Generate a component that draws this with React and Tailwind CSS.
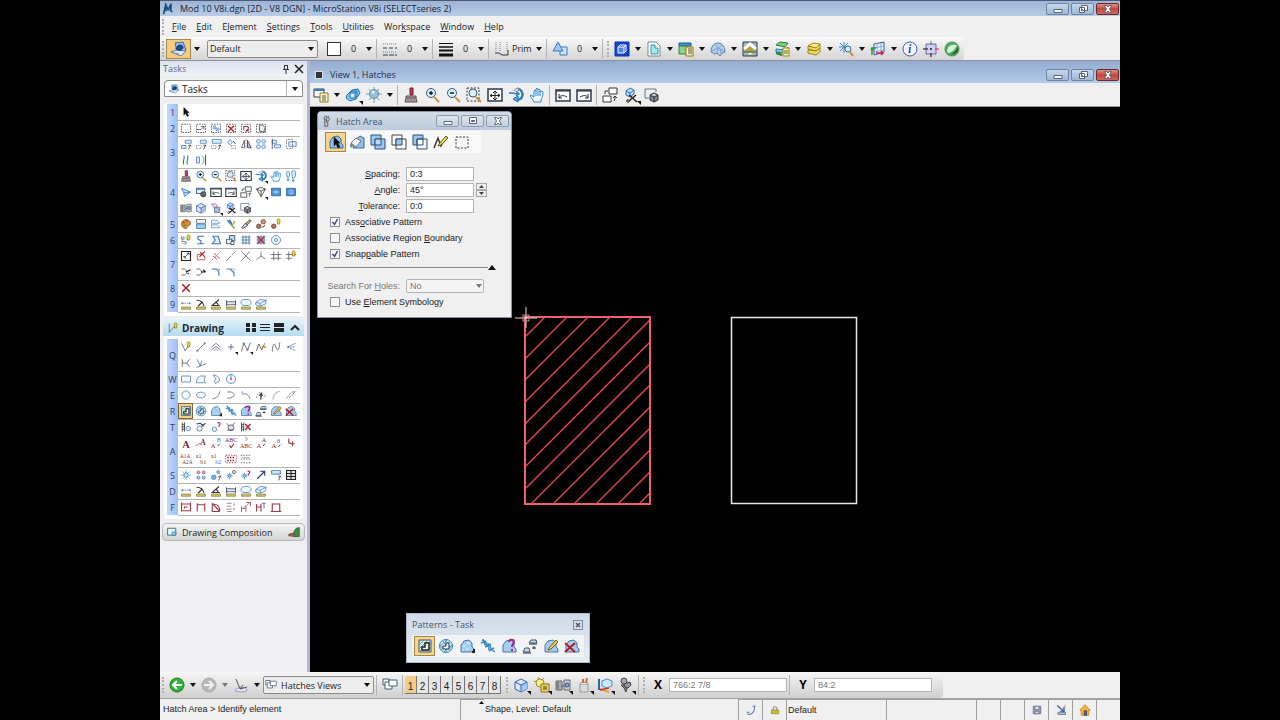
import React, { useState } from "react";

// Small path helpers, every icon lives on a 16x16 grid
const box = (x, y, w, h) => `M${x} ${y}h${w}v${h}h${-w}z`;
const dot = (x, y, r) => `M${x - r} ${y}a${r} ${r} 0 1 0 ${2 * r} 0a${r} ${r} 0 1 0 ${-2 * r} 0z`;

const BLUE = "#3b78c4";
const SKY = "#b9dcf5";
const DARK = "#2d3a4d";
const GRAY = "#7c8794";
const RED = "#b8232f";
const MAROON = "#9c3a44";
const DASH = "2 1.5";

const star = "M8 1v14M1 8h14M3 3l10 10M13 3L3 13";
const blob = "M2 14V7l3-4 5-1 3 3v4l2 2v3z";
const ruler = [box(2, 12, 12, 3), "#8f8430", "#cdc37a"];
const pencil = ["M6 10l7-8 2 2-7 7-3 1z", "#6b5a18", "#ecd257"];
const tinyArrow = ["M11 15c2-1 2-3 2-5M11 11l2-2 2 2", "#111"];
const bulb = ["M11 1a2.500 2.500 0 0 1 2 4v3h-3V5a2.500 2.500 0 0 1 1-4z", "#8a7a10", "#f0de3c"];

// [d, stroke, fill, width, dash] for shapes, { t, x, y, s, c } for letters
const ICONS = {
  logo: [["M2 15L5 2l3 7 4-8-1 9 3 2M5 2v9M12 1v10", "#174a7c", "none", 2]],
  model: [["M4 2l8-1 3 8-9 2z", "#3c68b0", "#8fc2f0"], ["M0 11l6-2 9 1-5 5z", "#5b80b8", "#dbe8f6"], ["M6 6c1-3 6-2 6 0s-2 4-5 3-2-1-1-3z", "#12356e", "#1a4a90"], ["M3 12l5 1", "#6d94c8"]],
  lineStyle: [["M1 3h14", GRAY, "none", 1, "1 1"], ["M1 7h14", DARK, "none", 1, "4 2"], ["M1 11h14", GRAY, "none", 1, "1 1"], ["M1 14h14", DARK, "none", 1, "5 1"]],
  lineWeight: [["M1 2.500h14", "#111"], ["M1 6h14", "#111", "none", 1.5], ["M1 9.500h14", "#111", "none", 2], ["M1 14h14", "#111", "none", 3]],
  elemClass: [["M2 1v9M6 1v9M13 1v9", GRAY, "none", 1, "1 1"], ["M1 12h4l3 2h6V9", "#333"]],
  priority: [[box(8, 6, 7, 8), BLUE, "#cfe3f7"], ["M1 10L6 1l5 9z", BLUE, "#9fc6ee"]],
  models: [[box(1, 1, 14, 14), "#0e2fa0", "#1546d0", 1], [box(4, 6, 6, 6), "#fff", "#4b80ee"], ["M4 6l2-2h6v6l-2 2M10 6l2-2", "#fff"]],
  page: [["M2 1h8l4 4v10H2z", GRAY, "#fff"], ["M5 4h4v3h3v6H5z", "#2a9aa0", "#a9e7ea"]],
  refs: [[box(1, 2, 12, 3), "#24548c", "#3b9ad6"], [box(1, 5, 8, 8), "#3d8448", "#8ccf8c"], [box(8, 6, 7, 9), "#8a7a20", "#fbf4b8"], ["M10 8h4M10 10h4M10 12h4", "#555"]],
  mesh: [["M1 11c0-4 2-9 7-9s7 5 7 9l-3 1-2 3-3-3-2 1z", "#5f7fb0", "#b4d0ee"], ["M5 4l3 3 4-3M8 7l-1 5M2 10l6-3 6 3M10 8l1 4", "#7f9ccc"]],
  raster: [[box(1, 1, 14, 14), "#2d3a4d", "#aab6b4"], ["M8 1l7 6-7 7-7-7z", "none", "#fff"], ["M2 10l6-5 6 5z", "none", "#b0a040"], [box(2, 10, 12, 2), "none", "#6f8a5c"]],
  pointCloud: [["M2 4l4-3 8 1-3 4z", "#2c7c32", "#7bd07b"], ["M2 8l9 1 3-3v2l-4 4-8-1z", "#2c7c9a", "#78cfe0"], ["M2 12l6 2", "#2c7c32", "none", 2], [box(9, 7, 6, 8), "#9a8a20", "#fbf2a0"], ["M10 10h4M10 12h4", "#666"]],
  levels: [["M2 5l5-3 7 1-4 4z", "#9a8420", "#fbec86"], ["M2 5v3l8 2 4-3V3l-4 4z", "#9a8420", "#f3dc5c"], ["M2 9v3l8 2 4-3V7l-4 3z", "#9a8420", "#f3dc5c"]],
  sunZoom: [["M6 1v11M1 6h10M2 2l8 8M10 2l-8 8", "#3a8cd0"], [dot(10, 8, 3), "#3568a8", "#d7ecfc"], ["M12 11l3 4", "#c08a30", "none", 2]],
  acs: [["M4 3l10-2v10L4 14z", "#3b58a8", "#eef3fc"], ["M7 2v11M11 2v10M4 7l10-2M4 11l10-2", "#8ba4d8"], ["M2 14V7h4M1 9l1-2 2 2", "#2c9a38", "none", 1.5], ["M6 12h7M11 10l2 2-2 2", "#d02838", "none", 1.5]],
  info: [[dot(8, 8, 7), "#3b58c8", "#f4f8ff"], { t: "i", x: 6, y: 12, s: 12, c: "#2743b4", f: "Liberation Serif", b: true }],
  snap: [[box(3, 3, 10, 10), "#6b68a8", "#cfcdf0"], ["M8 0v4", "#2c9a38"], ["M8 12v4M0 8h5", "#111"], ["M12 8h4", "#d02838"], [dot(8, 8, 1), "none", "#222"]],
  ball: [[dot(8, 8, 7), "#4c8c58", "#4cae5c"], ["M3 10C4 4 8 3 13 4c-2 5-6 8-9 8z", "none", "#d8f2da"], ["M7 13c3-1 6-4 7-7 1 5-3 8-7 7z", "none", "#185c28"]],

  viewAttr: [[box(1, 2, 10, 8), DARK, "#fff"], ["M1 3h10", BLUE, "none", 2], [box(7, 6, 8, 9), "#8a7a20", "#fbf6c8"], ["M9 9h4M9 11h4M9 13h4", "#555"]],
  display: [["M2 8l5-5 6-1 2 4-4 6-6 2-4-3z", "#2374b4", "#7ec8f0"], [box(5, 6, 5, 5), "#2374b4", "#d5effc"], ["M5 6l2-2h5v5l-2 2M10 6l2-2", "#2374b4"]],
  light: [["M8 0v16M0 7h16M3 2l10 11M13 2L3 13", "#6a9ab8"], [dot(8, 7, 4.5), "#5f8ca4", "#93c0d8"], [dot(7, 5, 1.5), "none", "#eaf7fc"]],
  brush: [["M7 1h3v7H7z", "#6d2028", "#b8434c"], ["M3 9h10v2H3zM3 11l-1 4h12l-1-4", "#5c4a4c", "#b8a4a8"], ["M5 12v3M8 12v3M11 12v3", "#777"]],
  zoomIn: [["M10 10l5 5", "#c8923c", "none", 2], [dot(7, 6, 4.500), "#3c5878", "#d9f0fb"], ["M5 6h4M7 4v4", "#123", "none", 1.5]],
  zoomOut: [["M10 10l5 5", "#c8923c", "none", 2], [dot(7, 6, 4.500), "#3c5878", "#d9f0fb"], ["M5 6h4", "#123", "none", 1.5]],
  zoomWin: [[box(1, 1, 12, 13), "#333", "none", 1, DASH], ["M10 10l5 5", "#c8923c", "none", 2], [dot(7, 6, 4), "#3c5878", "#d9f0fb"]],
  fit: [[box(1, 2, 14, 12), DARK, "#fff", 1.5], ["M8 4v9M3 8.500h10M6 6l2-2 2 2M6 11l2 2 2-2M5 7L3 8.500 5 10M11 7l2 1.500-2 1.500", "#222"]],
  rotate: [["M1 6h3l6 1M8 4l3 3-3 2", "#2a80c4", "none", 1.500], ["M11 2c5 3 5 11-3 11", "#2a80c4", "none", 2.500], ["M10 9v6l-5-3z", "#1a6cb0", "#55aeea"], ["M6 4c1-2 3-3 5-3l-1 3", "#8a6a9a"]],
  hand: [["M5 15c-1-3-3-4-4-6l1-1 3 2V4l1-1 1 1V2l1-1 1 1v1l1-1 1 1v2l2-1 1 1c0 4-1 6-2 8v2z", "#2e86c8", "#f3fafe"], ["M7 4v5M9 3v6M11 4v5", "#2e86c8"]],
  prevView: [[box(1, 3, 14, 11), DARK, "#fff", 1.500], ["M1 4h14", "#222", "none", 1], ["M4 11c1-3 5-3 8-1M4 7v4h3", "#222"]],
  nextView: [[box(1, 3, 14, 11), DARK, "#fff", 1.500], ["M1 4h14", "#222", "none", 1], ["M12 11c-1-3-5-3-8-1M12 7v4H9", "#222"]],
  copyView: [[box(7, 1, 8, 6), "#333", "#fff"], [box(1, 9, 8, 6), "#333", "#fff"], ["M3 7V4h3M12 14c1-1 1-3 1-4M11 11l2-2 2 2", "#333"]],
  clip: [["M3 4l4-3 4 2v4l-4 3-4-2z", "#2e6cb8", "#bfe0f8"], ["M3 4l4 2 4-3M7 6v4", "#2e6cb8"], ["M6 8l8 7M13 8l-7 6", "#222", "none", 1.5], [dot(5, 14, 1.3), "#222"]],
  clipMask: [["M1 2h11v3M1 2v9h4", "#678"], ["M6 8l4-2 4 2v5l-4 2-4-2z", "#333", "#7d8894"], ["M6 8l4 2 4-2M10 10v5", "#333"], ["M6 8l4-2 4 2-4 2z", "#444", "#c4ccd4"]],

  pointer: [["M5 2v10l2.500-2 2 4 2-1-2-4h3z", "#111", "#111", 0.5]],
  fence: [[box(2, 3, 12, 11), "#333", "none", 1, DASH]],
  fenceMod: [[box(2, 3, 12, 11), "#333", "none", 1, DASH], ["M2 10h6l4-4M8 6h4v4", "#444"]],
  fenceManip: [[box(2, 3, 12, 11), "#333", "none", 1, DASH], [dot(6, 7, 2), BLUE, SKY], [dot(10, 10, 2), BLUE, SKY]],
  fenceDel: [[box(2, 3, 12, 11), "#333", "none", 1, DASH], ["M4 5l8 8M12 5l-8 8", RED, "none", 2]],
  fenceDrop: [[box(2, 3, 12, 11), "#333", "none", 1, DASH], ["M5 11V6h5l2 2M8 12h3V9z", MAROON, "none", 1.5]],
  fenceFile: [[box(2, 3, 12, 11), "#333", "none", 1, DASH], ["M6 4h4l3 3v6H6z", "#444", "#eee"]],
  copy: [[box(7, 3, 8, 4), BLUE, "#dff0fb"], [box(2, 10, 6, 4), BLUE, "#dff0fb"], tinyArrow],
  move: [[box(7, 3, 8, 4), BLUE, "#dff0fb"], [box(2, 10, 6, 4), "#555", "none", 1, "1 1"], tinyArrow],
  scale: [[box(3, 2, 12, 5), BLUE, "#dff0fb"], [box(2, 10, 6, 4), "#555", "none", 1, "1 1"], tinyArrow],
  turn: [["M3 6l4-4 3 4-3 3z", BLUE, "#dff0fb"], [box(8, 10, 6, 4), "#555", "none", 1, "1 1"], ["M11 4l3 4", "#111"]],
  mirror: [["M6 3v10H2z", "#444", "#fff"], ["M8 1v14", RED, "none", 1, "1 1"], ["M10 3v10h5z", "#333", "#9fc6ee"]],
  array: [[dot(4.5, 4.5, 2.500), BLUE, "#dff0fb"], [dot(11.5, 4.5, 2.500), BLUE, "#dff0fb"], [dot(4.5, 11.500, 2.5), BLUE, "#dff0fb"], [dot(11.5, 11.5, 2.5), BLUE, "#dff0fb"]],
  align: [[box(3, 3, 6, 4), BLUE, "#dff0fb"], [box(6, 9, 8, 4), BLUE, "#dff0fb"], ["M3 1v14", "#333"]],
  stretch: [[box(5, 5, 10, 6), BLUE, "#dff0fb"], [box(2, 2, 8, 12), "#333", "none", 1, "1 1"]],
  wave: [["M5 2c3 4-3 7 0 12M10 2c3 4-3 7 0 12", "#2d6f9a", "none", 1.500]],
  offset: [[box(2, 4, 4, 8), BLUE, "#dff0fb"], ["M9 2c4 4 4 8 0 12", "#2d6f9a"], ["M14 1v14", "#222"]],
  walk: [["M2 4c0-3 4-3 4 0v4l-1 2H3zM3 12h2v2H3zM9 3c0-3 5-3 5 0v5l-2 3h-2zM10 13h2v2h-2z", "#2e86c8", "#d5effc"]],
  fly: [["M2 3l12 5-8 6-1-5z", "#2e6cb8", "#bfe0f8"], ["M5 9l9-1", "#2e6cb8"]],
  camera: [[box(2, 3, 11, 7), DARK, "#e8eef5"], ["M2 4h11", BLUE, "none", 2], [dot(11, 11, 3.5), "#333", "#5a6472"]],
  viewCone: [["M2 4l6-2 6 2-6 10z", "#333", "#f2f4f7"], ["M2 4l6 3 6-3M8 7v7", "#333"]],
  navTile: [[box(2, 3, 12, 10), "#285c9c", "#4c90d4"], ["M4 8h8M8 5v6", "#d6ecff"]],
  navTile2: [[box(2, 3, 12, 10), "#285c9c", "#4c90d4"], [dot(8, 8, 2.5), "#d6ecff"]],
  film: [[box(1, 4, 6, 9), "#666", "#a4aab2"], [box(9, 3, 6, 10), "#666", "#ccd0d6"], [dot(12, 8, 2), "#334a8c", "#88a4e0"], ["M3 5v7M7 9h2", "#555"]],
  cube: [["M2 5l6-3 6 3v7l-6 3-6-3z", "#3a62b0", "#d9e8fc"], ["M8 8l6-3v7l-6 3z", "none", "#a4c6f2"], ["M2 5l6 3 6-3M8 8v7", "#3a62b0"]],
  hide: [["M2 3l5-1 3 3-4 3z", "#9a6a88", "#f0d6e6"], [box(6, 7, 7, 7), "#57688c", "#aab9da"]],

  palette: [["M2 8c0-8 12-7 12-1 0 4-4 2-4 4s-2 4-4 3-4-3-4-6z", "#8c4a14", "#d88838"], [dot(5, 6, 1), "none", "#2743b4"], [dot(9, 4, 1), "none", "#c81c2c"], [dot(6, 10, 1), "none", "#2c9a38"]],
  attrs: [[box(2, 2, 12, 5), "#555", "#f4fafd"], [box(2, 8, 12, 6), BLUE, "#8ecbe8"], ["M4 11h8", "#fff", "none", 1, "1 1"]],
  attrs2: [["M2 3h8l3 4H2zM2 9h8l3 4H2z", "#5a8fc0", "#f4fafd"]],
  matchEl: [["M3 3l5 5M6 2l4 8", "#3a78c4", "none", 2], ["M7 8l6 6", "#8cae34", "none", 2], ["M11 8l2-4", "#d0a020", "none", 2]],
  brush2: [["M2 13l5-6 3 3-6 4z", "#333", "#d8d8d0"], ["M8 7l5-5 2 2-5 5z", "#333", "#c6a878"]],
  swap: [[dot(5, 11, 3), "#6a4028", "#a87858"], [dot(11, 5, 3), "#6a4028", "#c89a78"], ["M9 12c3 0 4-1 4-3", "#111"]],
  swapBulb: [[dot(5, 11, 3), "#6a4028", "#a87858"], bulb],
  groupBulb: [["M2 3v4h4M2 10h5v4M5 3v3", "#567"], [box(3, 5, 6, 8), "#678", "none", 1, "1 1"], bulb],
  chain: [["M12 3H4v4l4 2v4H3M12 13H7", BLUE, "none", 1.5]],
  shape: [["M4 3h7l3 10H3l4-5z", BLUE, "#dff0fb", 1.500]],
  region: [[box(6, 2, 7, 7), DARK, "#b9dcf5"], [box(2, 7, 7, 6), DARK, "#dff0fb"], [box(8, 10, 4, 4), DARK, "#fff"]],
  hash: [["M4 2v12M8 2v12M12 2v12M2 4h12M2 8h12M2 12h12", "#2d5f9a"]],
  hashRed: [["M4 2v12M8 2v12M12 2v12M2 4h12M2 8h12M2 12h12", "#38506f"], ["M4 4l8 8M12 4l-8 8", "#a82858", "none", 2]],
  target: [[dot(8, 8, 6), "#3b78c4", "#eef7fd"], [dot(8, 8, 2), "#3b78c4"]],
  modEl: [[box(2, 2, 12, 12), "#222", "#fff", 1.5], ["M4 9h3v3M6 10l6-6M9 4h3v3", "#222"]],
  partDel: [["M3 6h5M3 6v7h10V9", MAROON], ["M7 3l6 6M13 2L6 9", RED, "none", 1.500]],
  breakEl: [["M2 14L14 2", MAROON, "none", 1, "3 2"], ["M5 4l8 8M4 8l6 5", RED]],
  extend: [["M2 14l6-6", "#555"], ["M9 7l5-5", BLUE]],
  intersect: [["M2 2l12 12", "#555"], ["M13 2L2 14", "#555"]],
  extLine: [["M2 13l6-5V2M8 8l6 4", "#555"]],
  trim: [["M5 2v12M11 2v12M1 6h14M1 11h14", "#556"]],
  trimBulb: [["M5 2v12M1 6h14M1 11h9", "#556"], bulb],
  insVert: [["M2 4h4c4 2 4 6 0 8H2", "#444"], ["M8 8l6-3", "#111", "none", 1.500], [dot(11, 10, 1), "none", "#111"]],
  delVert: [["M2 4h4c4 2 4 6 0 8H2", "#444"], ["M8 8l6 0M11 5l3 3", "#111", "none", 1.500]],
  fillet: [["M2 4h5c4 0 5 4 5 9", BLUE, "none", 1.500], ["M7 4h6v3", "#999"]],
  chamfer: [["M2 4h5l5 5v5", BLUE, "none", 1.500], ["M7 4h6v3", "#999"]],
  cross: [["M3 3l10 10M13 3L3 13", "#b01c24", "none", 2]],
  mDist: [["M3 7h10", BLUE, "none", 1, "2 1"], [dot(3, 7, 1), BLUE], [dot(13, 7, 1), BLUE], ruler],
  mRad: [["M2 3c5 0 9 3 10 8M4 11l6-6", "#333", "none", 1.500], ruler],
  mAng: [["M12 2L3 10h10M8 6c2 1 3 2 3 4", "#333", "none", 1.500], ruler],
  mLen: [["M2 3v8M14 3v8", "#345"], [box(2, 5, 12, 4), "#345", "#dfe9f4"], ruler],
  mArea: [["M5 2h6c5 1 5 7 0 8H5c-5-1-5-7 0-8z", BLUE, "#eef7fd"], ruler],
  mVol: [["M1 6l6-4 8 1-1 5-8 3-5-2zM1 6l6 1 8-4M7 7v4", BLUE, "#eef7fd"], ruler],

  drawing: [["M3 2v12M3 14l9-11", "#567"], bulb],
  smartLine: [["M2 3l5 10 4-6", "#456"], bulb],
  line: [["M3 13L13 3", "#555"], [dot(3, 13, 1), BLUE], [dot(13, 3, 1), BLUE]],
  multiLine: [["M2 8l6-5 6 5M2 12l6-5 6 5M5 13l3-3 3 3", "#667"]],
  point: [["M8 4v8M4 8h8", "#38506f"]],
  curve: [["M2 14L5 3l5 9 4-10", "#445"], [dot(5, 3, 1), BLUE], [dot(10, 12, 1), BLUE]],
  curvePen: [["M2 13L5 4l4 8 4-9", "#445"], ["M9 8h6", "#c09a20", "none", 2]],
  nCurve: [["M3 14C4 2 6 2 8 8s4 6 5-6", "#445"]],
  bisect: [["M14 3L3 8l11 5M3 8h10", "#3a6a9c", "none", 1, "3 1"]],
  perp: [["M3 3v10M3 8h6M13 3l-4 5 4 5", "#445"]],
  angleLine: [["M3 3l4 9 8-3M7 12l-5 2M7 12l2-7", "#456a8c"]],
  rect: [[box(2, 4, 12, 8), "#4a78ac", "#f4faff"]],
  poly: [["M2 13c0-6 3-9 6-9h6l-2 4 2 5z", "#4a78ac", "#f4faff"]],
  orthoPoly: [["M4 3h4l5 5-1 3-5 3-1-4 2-2z", "#4a78ac", "#f4faff"]],
  regPoly: [[dot(8, 8, 6), BLUE, "#f4faff"], [dot(8, 8, 1), "#c02838"], ["M8 8V2", BLUE]],
  circle: [[dot(8, 8, 5.5), "#4a78ac", "#f8fcff"]],
  ellipse: [["M2 8c0-5 12-5 12 0s-12 5-12 0z", "#4a78ac", "#f8fcff"]],
  arc: [["M3 13c5 0 9-4 10-10", "#556"]],
  halfEll: [["M3 4c7-1 11 3 9 5s-5 4-9 3", "#556"]],
  qEll: [["M3 7c5-2 9 1 10 6", "#556"], ["M3 3v3", BLUE]],
  arcMod: [["M2 12C3 2 13 2 14 12", "#666", "none", 1, DASH], ["M8 6v8M6 9l2-3 2 3", "#222", "none", 1.500]],
  arcAng: [["M4 14c0-6 4-10 9-11", "#889"]],
  arcAxis: [["M2 13c3-6 6-9 12-10", "#889"], ["M10 8l3-4M5 12l3-3", "#456"]],
  hatch: [[box(2, 2, 12, 12), "#4a5560", "#d4ecf6"], ["M2 7l5-5M2 11l9-9M2 14L14 2M5 14l9-9M9 14l5-5", "#4a98b8"], ["M8 5h4v7H5V9h3z", "#222", "#f6f1dc", 1.500]],
  crossHatch: [[dot(8, 8, 6.500), "#3a80a8", "#d4ecf8"], ["M4 2l9 11M2 8l7-6M3 12L13 3M6 14l8-7M8 2v12M2 9h12", "#4a98c0"], ["M8 5h3v6H5V8h3z", "#234", "#f4f8fa"]],
  pattern: [[blob, "#4a74a8", "#a5cdec"], ["M13 14h2v-3", "#222", "none", 2], ["M4 8h2M8 5h2M7 11h3M4 12h1", "#e6f4fd"]],
  linPattern: [["M2 2l4 2 0 3 4 0 1 4 4 3M1 5l5-2M5 9l6-3M9 13l5-3M3 1l2 6M8 5l1 7", "#3a8cc4", "none", 1.5]],
  showPattern: [[blob, "#4a74a8", "#a5cdec"], ["M8 4c0-3 5-3 5 0 0 2-2 2-2 5M11 11v2", "#a02890", "none", 2]],
  matchPattern: [["M7 5l2-3h5l1 3z", "#456", "#b9dcf5"], ["M1 14l2-4h4l1 4z", "#456", "#b9dcf5"], ["M7 6h8M1 15h8", "#333"], ["M12 8v3M10 10h4", "#333"]],
  chgPattern: [[blob, "#4a74a8", "#a5cdec"], pencil],
  delPattern: [[blob, "#4a74a8", "#a5cdec"], ["M1 5l10 9M11 5L1 14", "#b01c24", "none", 2]],
  cell: [["M3 2v12M6 2v12M3 5h3M3 8h3M3 11h3", "#222"], [dot(11, 10, 3), BLUE, "#dff0fb"]],
  cellMod: [[dot(6, 10, 3.5), "#567", "#eef3f8"], ["M2 4l5-1 5 4M9 7l5-4", "#346", "none", 1.500]],
  cellQ: [[dot(6, 11, 3), "#3b78c4", "#dff0fb"], ["M10 3c3-2 5 1 2 3v2", "#a02890", "none", 1.500]],
  cellMask: [[dot(8, 9, 4), "#555", "#dde"], ["M2 3l4 4M13 2l-3 4M3 12h8", "#444"]],
  cellDel: [["M2 2v12M5 2v12M2 5h3M2 8h3M2 11h3", "#222"], ["M7 4l7 8M14 4l-7 8", "#a82838", "none", 2]],
  textA: [{ t: "A", x: 3, y: 14, s: 14, c: "#8c2430", b: true }],
  textNote: [["M1 12l4-3M5 9h3", MAROON], { t: "A", x: 7, y: 11, s: 10, c: "#8c2430", b: true }],
  textEdit: [{ t: "A", x: 1, y: 15, s: 9, c: "#8c2430" }, { t: "B", x: 9, y: 7, s: 8, c: "#3b78c4" }, ["M10 12l3-3", "#111"]],
  textSpell: [{ t: "ABC", x: 0, y: 7, s: 8, c: "#8c2430" }, ["M6 11l2 3 4-5", RED, "none", 1.500]],
  textShow: [["M7 1c3 0 3 2 1 4", "#a02890"], { t: "ABC", x: 0, y: 15, s: 8, c: "#8c2430" }],
  textMatch: [{ t: "A", x: 2, y: 15, s: 9, c: "#8c2430" }, { t: "A", x: 9, y: 7, s: 8, c: "#444" }, ["M11 12l2-3", "#111"]],
  textChg: [{ t: "A", x: 2, y: 15, s: 9, c: "#8c2430" }, { t: "a", x: 9, y: 8, s: 10, c: "#3b78c4" }, ["M11 13l3-3", "#111"]],
  textPt: [["M5 2v6h3M10 6v6M7 9h6", MAROON, "none", 1.500]],
  textCopy: [{ t: "A1A", x: 0, y: 7, s: 7, c: "#8c2430" }, { t: "A2A", x: 3, y: 14, s: 7, c: "#445" }],
  textField: [{ t: "a1", x: 1, y: 7, s: 8, c: "#8c2430" }, { t: "b1", x: 7, y: 14, s: 8, c: "#445" }],
  textField2: [{ t: "a1", x: 1, y: 7, s: 8, c: "#445" }, { t: "b2", x: 7, y: 14, s: 8, c: "#3b78c4" }],
  textBox: [[box(1, 3, 14, 10), "#8c2430", "none", 1, DASH], ["M3 6h10M3 10h10", "#8c2430", "none", 2, DASH]],
  textBox2: [["M1 3h14M1 8h14M1 13h14", "#444", "none", 1, DASH], ["M3 6h10", "#444", "none", 1, "1 1"]],
  sun: [[star, "#58a4d0"], [dot(8, 8, 3), "#3a80b8", "#c2e6f8"]],
  cells4: [[dot(4.5, 4.500, 2), "#a05860", "#e0b0b4"], [dot(11.500, 4.5, 2), "#a05860", "#e0b0b4"], [dot(4.500, 11.500, 2), "#3b78c4", "#a9d0ee"], [dot(11.5, 11.5, 2), "#3b78c4", "#a9d0ee"]],
  cellRep: [[dot(5, 11, 3), "#3b78c4", "#7cb8e8"], [dot(11, 4, 2), "#3b78c4", "#a9d0ee"], tinyArrow],
  cellSym: [["M6 5v9M2 9h8M3 6l6 6M9 6l-6 6", "#58a4d0"], [dot(6, 9, 2), "#3a80b8", "#9cd0ec"], [dot(12, 4, 2), "#333"]],
  cellSymQ: [["M6 5v9M2 9h8M3 6l6 6M9 6l-6 6", "#58a4d0"], [dot(6, 9, 2), "#3a80b8", "#9cd0ec"], ["M10 3c4-1 4 2 1 4v2", "#a02890", "none", 1.500]],
  arrowNE: [["M3 13L12 4M7 3h6v6", "#2a3a78", "none", 1.5]],
  cellLib: [[box(2, 2, 12, 5), "#3b78c4", "#a9d0ee"], ["M4 4h8", "#fff", "none", 2, DASH], tinyArrow],
  table: [[box(2, 2, 12, 12), "#222", "#dfe3e8", 1.5], ["M2 6h12M2 10h12M8 2v12", "#222", "none", 1.5]],
  dimBox: [["M2 2v12M14 2v12M2 4h12M2 13h12M6 10V8h4", MAROON, "none", 1.500]],
  dimLin: [["M3 3v11M13 3v11M3 5h10", MAROON, "none", 1.500]],
  dimAng: [["M3 3v11h10M3 3l10 11M3 4c6 0 10 3 10 9", MAROON, "none", 1.500]],
  dimList: [["M2 3h7M3 7h5M2 11h7M3 14h6", "#667", "none", 1], ["M12 3v3M12 9v3", MAROON]],
  dimChg: [["M2 7v8M8 7v8M2 10h6M8 2h6v5M9 6l4-4", MAROON], ["M5 9l3-3", "#445"]],
  dimChg2: [["M2 4v10M8 4v10M2 8h6", MAROON, "none", 1.5], ["M9 3h5M12 3v7", "#445"]],
  dimShape: [["M3 3v11M13 3v11M3 4h10M1 14h14", MAROON, "none", 1.500]],
  comp: [[box(1, 2, 13, 11), "#2c6c9c", "#eef7fd", 1.5], [box(8, 8, 6, 5), "#2c6c9c", "#9cd0ec"]],
  chart: [["M1 11l8-2v5l-8-1z", "#733", "#c05a50"], ["M8 14V7l3-4 4-1v12z", "#265c2c", "#3c8c44"]],

  hatchWin: [["M5 15V8L4 4l2-3 2 2 2-1 1 4-2 3v6z", "#444", "#c6ccd4"], ["M7 3v7M6 6l3 2", "#444"]],
  pickArea: [[blob, "#3c6ca8", "#8ec0ea"], ["M6 3v9l2-2 2 4 2-1-2-4h2z", "#111", "#111", 0.5]],
  flood: [["M4 14l3-9 4-3 4 2v10z", "#3c6ca8", "#8ec0ea"], ["M2 9l5-5 5 3-5 6z", "#777", "#f2f4f7"], ["M2 9c-2 2-1 4 0 5l3-3z", "none", "#888"]],
  union: [[box(1, 1, 10, 10), "#2d4f7a", "#9cc8ec"], [box(5, 5, 10, 10), "#2d4f7a", "#9cc8ec"], [box(5, 5, 6, 6), "#2d4f7a", "#b9dcf5"]],
  inter: [[box(1, 1, 10, 10), "#444", "#fafafa"], [box(5, 5, 10, 10), "#444", "#fafafa"], [box(5, 5, 6, 6), "#2d4f7a", "#9cc8ec"]],
  diff: [[box(1, 1, 10, 10), "#2d4f7a", "#9cc8ec"], [box(5, 5, 10, 10), "#2d4f7a", "#f7f9fb"], [box(5, 5, 6, 6), "#2d4f7a"]],
  points: [["M1 14L5 4l3 8 2-4", "#333", "none", 1.500], pencil],

  back: [[dot(8, 8, 7), "#1b7c22", "#2cb436"], ["M13 8H4M8 4L4 8l4 4", "#fff", "none", 2]],
  fwd: [[dot(8, 8, 7), "#aaa", "#b8b8b8"], ["M3 8h9M8 4l4 4-4 4", "#f4f4f4", "none", 2]],
  acsView: [["M2 13c4-4 12-3 12 0s-12 2-12 0z", "#99b", "#e9e4f4"], ["M3 2l4 10 7-2M7 12l3-4", "#556"]],
  viewGroup: [[box(1, 2, 6, 6), "#445a78", "#fff"], [box(3, 5, 7, 7), "#445a78", "#fff"], [box(7, 3, 8, 6), "#445a78", "#fff"]],
  lights: [[dot(6, 6, 4), "#9a8a20", "#f9ee90"], ["M0 4l3 1M4 0l1 2M10 1L8 3", "#9a8a20"], [box(7, 7, 8, 8), "#8a6a10", "#f4d85c"], ["M9 10h4M9 12h4", "#333"]],
  jar: [[box(4, 7, 8, 8), "#999", "#d9dde2"], ["M4 7c0-2 8-2 8 0", "#888", "#f4f6f8"], ["M7 6V2M10 6l1-5", "#c86c38", "none", 2]],
  axes: [["M5 4l5-2 5 2v5l-5 2-5-2z", "#4e8cc8", "#cfe8f8"], ["M3 12l9 3", "#d8a828", "none", 2], ["M3 13l9-2", "#c03838", "none", 1.500], ["M2 2v11", "#2c68a8", "none", 2]],
  gnome: [["M3 8l10 0-4 3-1 4-2-4z", "#444", "#7d848c"], ["M6 7l6-2 1 3-3 3-3-1z", "#444", "#8f969e"], [dot(6, 4, 3), "#444", "#a6acb4"]],
  snapMode: [["M3 13c4 2 7 0 9-4l1-7M10 3h4M2 11h4", "#5a7cc8", "none", 1.500]],
  lock: [["M5 8V5c0-3 6-3 6 0v3", "#777", "none", 1.5], [box(2, 8, 12, 6), "#8a8020", "#c8bc30"]],
  disk: [[box(2, 2, 12, 12), "#556", "#9aa2c4"], [box(5, 2, 6, 5), "#556", "#f4f4fa"], [box(5, 10, 6, 4), "#556", "#dde"]],
  plot: [["M3 2l9 8M12 4v6H7", "#3a68b8", "none", 2], ["M4 14h10v-3H4z", "#567", "#b8c4e0"], [dot(13, 3, 1), "#caa020"]],
  home: [["M8 1l7 7-2 1v6H3V9L1 8z", "#b07818", "#f4b838"], [box(7, 9, 3, 6), "#335", "#4a68b8"]],
};

const Icon = ({ name, className = "w-4 h-4" }) => (
  <svg viewBox="0 0 16 16" className={`${className} shrink-0 overflow-visible`} aria-hidden="true">
    {ICONS[name].map((p, i) =>
      Array.isArray(p) ? (
        <path key={i} d={p[0]} stroke={p[1] || "none"} fill={p[2] || "none"} strokeWidth={p[3] || 1} strokeDasharray={p[4]} />
      ) : (
        <text key={i} x={p.x} y={p.y} fontSize={p.s} fill={p.c} fontWeight={p.b ? 700 : 400} fontStyle={p.f ? "italic" : "normal"} fontFamily={`"${p.f || "Liberation Serif"}", serif`}>
          {p.t}
        </text>
      )
    )}
  </svg>
);

const Caret = ({ dim }) => (
  <svg viewBox="0 0 6 4" className="w-[6px] h-1 shrink-0" aria-hidden="true">
    <path d="M0 0h6L3 4z" fill={dim ? "#777" : "#111"} />
  </svg>
);

// "&" marks the accelerator letter
const Accel = ({ text }) => {
  const at = text.indexOf("&");
  if (at < 0) return text;
  return (
    <>
      {text.slice(0, at)}
      <span className="underline underline-offset-1">{text[at + 1]}</span>
      {text.slice(at + 2)}
    </>
  );
};

const Tool = ({ name, active, corner }) => (
  <button
    aria-label={name}
    className={`relative w-[21px] h-5 shrink-0 flex items-center justify-center ${active ? "border border-[#a08850] bg-[#f8d488]" : ""}`}
  >
    <Icon name={name} />
    {corner && <span className="absolute right-0 bottom-0 border-l-4 border-t-4 border-l-transparent border-t-[#111]" />}
  </button>
);

const Drop = ({ dim }) => (
  <button aria-label="More" className="w-[11px] h-5 shrink-0 flex items-center justify-center">
    <Caret dim={dim} />
  </button>
);

const Sep = () => <div className="w-px h-5 mx-[2px] shrink-0 bg-[#b4b4b4]" />;
const Grip = () => <div className="w-0 h-4 mx-[2px] shrink-0 border-l-2 border-dotted border-[#b0b0b0]" />;

const WindowButtons = ({ plain }) => (
  <div className="flex gap-[2px] shrink-0">
    {["Minimize", "Restore", "Close"].map((label) => (
      <button
        key={label}
        aria-label={label}
        className={`w-[23px] h-3 rounded-[2px] border flex items-center justify-center ${
          label === "Close" && !plain
            ? "border-[#6c2a30] bg-linear-to-b from-[#dc9088] via-[#c4453c] to-[#cf6a5a]"
            : plain
            ? "border-[#8f9db0] bg-linear-to-b from-[#dde5ee] to-[#c6d2df]"
            : "border-[#70859f] bg-linear-to-b from-[#c6d8ec] to-[#9db8d6]"
        }`}
      >
        <svg viewBox="0 0 12 10" className="w-3 h-[10px]" fill="#fff" stroke="#5a6676" strokeWidth="1">
          {label === "Minimize" && <path d="M2 5.500h8v3H2z" />}
          {label === "Restore" && (plain ? <path d="M2.500 1.500h7v6h-7zM4.500 4.500h3v1h-3z" /> : <path d="M4.500 1.500h6v5h-6zM2.500 3.500h5v5h-5zM4.500 5.500h1v1h-1z" />)}
          {label === "Close" && (
            <path d="M2.500 1.500h2L6 3l1.500-1.500h2L7.500 5l2 3.500h-2L6 7 4.500 8.500h-2l2-3.500z" />
          )}
        </svg>
      </button>
    ))}
  </div>
);

const MENUS = ["&File", "&Edit", "E&lement", "&Settings", "&Tools", "&Utilities", "Wor&kspace", "&Window", "&Help"];

const PRIMARY = ["models", "page", "refs", "mesh", "raster", "pointCloud", "levels", "sunZoom", "acs"];

const MAIN_TASKS = [
  ["1", ["pointer"]],
  ["2", ["fence", "fenceMod", "fenceManip", "fenceDel", "fenceDrop", "fenceFile"]],
  ["3", ["copy", "move", "scale", "turn", "mirror", "array", "align", "stretch", "wave", "offset"]],
  ["4", ["brush", "zoomIn", "zoomOut", "zoomWin", "fit", "rotate", "hand", "walk", "fly", "camera", "prevView", "nextView", "copyView", "viewCone", "navTile", "navTile2", "film", "cube", "hide", "clip", "clipMask"]],
  ["5", ["palette", "attrs", "attrs2", "matchEl", "brush2", "swap", "swapBulb"]],
  ["6", ["groupBulb", "chain", "shape", "region", "hash", "hashRed", "target"]],
  ["7", ["modEl", "partDel", "breakEl", "extend", "intersect", "extLine", "trim", "trimBulb", "insVert", "delVert", "fillet", "chamfer"]],
  ["8", ["cross"]],
  ["9", ["mDist", "mRad", "mAng", "mLen", "mArea", "mVol"]],
];

const DRAWING_TASKS = [
  ["Q", ["smartLine", "line", "multiLine", "point", "curve", "curvePen", "nCurve", "bisect", "perp", "angleLine"]],
  ["W", ["rect", "poly", "orthoPoly", "regPoly"]],
  ["E", ["circle", "ellipse", "arc", "halfEll", "qEll", "arcMod", "arcAng", "arcAxis"]],
  ["R", ["hatch", "crossHatch", "pattern", "linPattern", "showPattern", "matchPattern", "chgPattern", "delPattern"]],
  ["T", ["cell", "cellMod", "cellQ", "cellMask", "cellDel"]],
  ["A", ["textA", "textNote", "textEdit", "textSpell", "textShow", "textMatch", "textChg", "textPt", "textCopy", "textField", "textField2", "textBox", "textBox2"]],
  ["S", ["sun", "cells4", "cellRep", "cellSym", "cellSymQ", "arrowNE", "cellLib", "table"]],
  ["D", ["mDist", "mRad", "mAng", "mLen", "mArea", "mVol"]],
  ["F", ["dimBox", "dimLin", "dimAng", "dimList", "dimChg", "dimChg2", "dimShape"]],
];

const PATTERN_TOOLS = DRAWING_TASKS[3][1];
const HAS_CORNER = ["rotate", "viewCone", "hide", "point", "curve"];

const TaskGrid = ({ rows }) => (
  <div className="px-[3px]">
    {rows.map(([key, tools]) => (
      <div key={key} className="flex">
        <div className="w-[11px] shrink-0 flex items-center justify-center bg-linear-to-r from-[#c3dafa] to-[#9dbdf4] text-[9px] text-[#2b3f6c]">{key}</div>
        <div className="flex flex-wrap w-[122px] border-b border-[#b4b4b4] -mb-px">
          {tools.map((name) => (
            <button
              key={name}
              aria-label={name}
              className={`relative w-[15px] h-4 flex items-center justify-center ${
                key === "R" && name === "hatch" ? "border border-[#7a6840] bg-[#f4cf86]" : ""
              }`}
            >
              <Icon name={name} className="w-3 h-3" />
              {HAS_CORNER.includes(name) && <span className="absolute right-0 bottom-0 border-l-3 border-t-3 border-l-transparent border-t-[#111]" />}
            </button>
          ))}
        </div>
      </div>
    ))}
  </div>
);

const TasksPanel = () => (
  <aside className="w-[150px] shrink-0 flex flex-col bg-[#efeff1] border-r-3 border-[#b3b4d6]">
    <div className="h-[15px] px-[3px] flex items-center justify-between bg-linear-to-b from-[#dce3ee] to-[#f0f3f7] text-[9px] text-[#5c6a80]">
      <span>Tasks</span>
      <span className="flex items-center gap-1">
        <button aria-label="Pin">
          <svg viewBox="0 0 8 10" className="w-2 h-[10px]" fill="none" stroke="#333">
            <path d="M2.500 1v4M5.500 1v4M2 1.500h4M1 5.500h6M4 6v4" />
          </svg>
        </button>
        <button aria-label="Close tasks">
          <svg viewBox="0 0 10 10" className="w-[10px] h-[10px]" fill="none" stroke="#222" strokeWidth="1.500">
            <path d="M1 1l8 8M9 1L1 9" />
          </svg>
        </button>
      </span>
    </div>
    <div className="mx-1 mt-1 h-[17px] flex items-center rounded-t border border-[#8a8a8a] bg-white text-[10px] text-[#222]">
      <span className="flex items-center gap-[3px] pl-1 flex-1">
        <Icon name="model" className="w-[10px] h-[10px]" />
        Tasks
      </span>
      <button aria-label="Task list" className="w-4 h-full flex items-center justify-center border-l border-[#b0b0b0]">
        <Caret />
      </button>
    </div>
    <div className="mx-1 mt-[7px] pb-1 bg-white">
      <TaskGrid rows={MAIN_TASKS} />
    </div>
    <div className="mx-[3px] mt-[3px] h-[17px] px-1 flex items-center rounded-t bg-linear-to-b from-[#e2f2fa] to-[#b4dbee] text-[10px] font-bold text-[#1c2430]">
      <Icon name="drawing" className="w-3 h-3" />
      <span className="ml-[3px] flex-1">Drawing</span>
      <span className="flex items-center gap-1">
        <svg viewBox="0 0 10 9" className="w-[10px] h-[9px]" fill="#222"><path d="M0 0h4v4H0zM6 0h4v4H6zM0 5h4v4H0zM6 5h4v4H6z" /></svg>
        <svg viewBox="0 0 10 9" className="w-[10px] h-[9px]" fill="#222"><path d="M0 1h10v1H0zM0 4h10v1H0zM0 7h10v1H0z" /></svg>
        <svg viewBox="0 0 10 9" className="w-[10px] h-[9px]" fill="#222"><path d="M0 0h10v4H0zM0 5h10v4H0z" /></svg>
        <svg viewBox="0 0 10 9" className="w-[10px] h-[9px] ml-[2px]" fill="none" stroke="#222" strokeWidth="2"><path d="M1 7l4-4 4 4" /></svg>
      </span>
    </div>
    <div className="mx-1 pt-[3px] pb-1 bg-white rounded-b">
      <TaskGrid rows={DRAWING_TASKS} />
    </div>
    <button className="mx-[2px] mt-1 h-[18px] px-1 flex items-center rounded border border-[#b8b8b8] bg-linear-to-b from-[#f4f4f4] to-[#d4d4d4] text-[9px] text-[#222]">
      <Icon name="comp" className="w-[10px] h-[10px]" />
      <span className="ml-[5px] flex-1 text-left">Drawing Composition</span>
      <Icon name="chart" className="w-3 h-3" />
    </button>
  </aside>
);

const Check = ({ id, label, defaultChecked }) => (
  <div className="h-4 flex items-center gap-[5px]">
    <span className="relative w-[10px] h-[10px]">
      <input id={id} type="checkbox" defaultChecked={defaultChecked} className="peer appearance-none block w-[10px] h-[10px] border border-[#8f8f8f] bg-[#f6f6f6]" />
      <svg viewBox="0 0 10 10" className="hidden peer-checked:block absolute inset-0 pointer-events-none" fill="none" stroke="#3c4a88" strokeWidth="1.500">
        <path d="M2.500 5l2 2.500 3-5.500" />
      </svg>
    </span>
    <label htmlFor={id}><Accel text={label} /></label>
  </div>
);

const Field = ({ id, label, value }) => (
  <>
    <label htmlFor={id} className="text-right"><Accel text={label} /></label>
    <input id={id} defaultValue={value} className="w-[68px] h-[14px] px-[3px] border border-[#b4b4b4] bg-white outline-none" />
  </>
);

const HatchDialog = () => (
  <section className="absolute left-[7px] top-1 w-[195px] h-[207px] rounded-t border border-[#8894a4] bg-[#f0f0f0] font-['Liberation_Sans',sans-serif] text-[9px] text-[#222]">
    <header className="h-[18px] pl-[3px] pr-[2px] flex items-center rounded-t bg-linear-to-b from-[#d3dce6] to-[#bccbdc]">
      <Icon name="hatchWin" className="w-3 h-3" />
      <h2 className="ml-[3px] flex-1 font-['Open_Sans',sans-serif] text-[9px] text-[#44566e]">Hatch Area</h2>
      <WindowButtons plain />
    </header>
    <div className="ml-[7px] mt-px w-[156px] h-[22px] flex items-center bg-[#f8f8f8]">
      {["pickArea", "flood", "union", "inter", "diff", "points", "fence"].map((n) => (
        <Tool key={n} name={n} active={n === "pickArea"} />
      ))}
    </div>
    <div className="mt-[14px] flex items-center">
      <div className="ml-[7px] grid grid-cols-[75px_68px] gap-x-[6px] gap-y-[2px] items-center">
        <Field id="spacing" label="&Spacing:" value="0:3" />
        <Field id="angle" label="&Angle:" value="45°" />
        <Field id="tolerance" label="&Tolerance:" value="0:0" />
      </div>
      <div className="ml-[2px] flex flex-col">
        <button aria-label="Increase angle" className="w-[11px] h-[7px] flex items-center justify-center border border-[#a8a8a8] rotate-180"><svg viewBox="0 0 5 3" className="w-[5px] h-[3px]" fill="#444"><path d="M0 0h5L2.500 3z" /></svg></button>
        <button aria-label="Decrease angle" className="w-[11px] h-[7px] flex items-center justify-center border border-[#a8a8a8]"><svg viewBox="0 0 5 3" className="w-[5px] h-[3px]" fill="#444"><path d="M0 0h5L2.500 3z" /></svg></button>
      </div>
    </div>
    <div className="ml-3 mt-px">
      <Check id="assoc" label="Ass&ociative Pattern" defaultChecked />
      <Check id="boundary" label="Associative Region &Boundary" />
      <Check id="snappable" label="Snap&pable Pattern" defaultChecked />
    </div>
    <div className="ml-[6px] mt-px w-[172px] h-2 flex items-center">
      <div className="flex-1 h-px bg-[#888]" />
      <svg viewBox="0 0 8 5" className="w-2 h-[5px]"><path d="M0 5h8L4 0z" fill="#111" /></svg>
    </div>
    <div className="mt-2 flex items-center text-[#777]">
      <label htmlFor="holes" className="w-[82px] text-right"><Accel text="Search For &Holes:" /></label>
      <div className="relative ml-[6px]">
        <select id="holes" disabled className="appearance-none block w-[78px] h-[14px] pl-[3px] rounded-[2px] border border-[#b4b4b4] bg-[#f4f4f4]">
          <option>No</option>
        </select>
        <span className="absolute inset-y-0 right-[2px] flex items-center pointer-events-none"><Caret dim /></span>
      </div>
    </div>
    <div className="ml-3 mt-px">
      <Check id="symbology" label="Use &Element Symbology" />
    </div>
  </section>
);

const PatternsPalette = () => (
  <section className="absolute left-[96px] bottom-[9px] w-[184px] h-[50px] border border-[#aab8c8] bg-linear-to-b from-[#cfdbe8] to-[#e6edf4]">
    <header className="h-[21px] pl-[5px] pr-[6px] flex items-center justify-between text-[9px] text-[#44566e]">
      <h2>Patterns - Task</h2>
      <button aria-label="Close palette" className="w-[10px] h-[10px] flex items-center justify-center border border-[#7c8ca0]">
        <svg viewBox="0 0 6 6" className="w-[6px] h-[6px]" stroke="#556" strokeWidth="1.500"><path d="M1 1l4 4M5 1L1 5" /></svg>
      </button>
    </header>
    <div className="mx-[5px] pl-[2px] h-[22px] flex items-center bg-[#f2f3f5]">
      {PATTERN_TOOLS.map((n) => <Tool key={n} name={n} active={n === "hatch"} />)}
    </div>
  </section>
);

const HATCH_STEPS = [20, 42, 63, 85, 107, 128, 150, 172, 193, 215, 236, 258, 280, 301];

const Canvas = () => (
  <main className="relative flex-1 min-h-0 bg-black overflow-hidden">
    <svg viewBox="0 0 360 200" className="absolute left-[204px] top-[200px] w-[360px] h-[200px]" fill="none">
      <clipPath id="shape"><rect x="11" y="10" width="125" height="187" /></clipPath>
      <g clipPath="url(#shape)" stroke="#f04650" strokeWidth="1.300">
        {HATCH_STEPS.map((s) => <path key={s} d={`M${11 + s} 10L11 ${10 + s}`} />)}
      </g>
      <rect x="11" y="10" width="125" height="187" stroke="#f0606a" strokeWidth="2" />
      <rect x="217.500" y="10.500" width="125" height="186" stroke="#e8e8e8" strokeWidth="1.500" />
      <path d="M12 0v21M1 11h22" stroke="#ddd" />
      <rect x="9" y="8" width="6" height="6" stroke="#c88" />
    </svg>
    <HatchDialog />
    <PatternsPalette />
  </main>
);

const ViewWindow = () => (
  <div className="flex-1 min-w-0 flex flex-col">
    <header className="h-[22px] pl-[5px] pr-px pt-[6px] pb-px flex items-center bg-linear-to-b from-[#94acd0] to-[#b2cce8] text-[9px] text-[#1c2c44]">
      <svg viewBox="0 0 8 8" className="w-2 h-2"><path d="M0 0h8v8H0z" fill="#d8e2ee" /><path d="M1 1h6v6H1z" fill="#333" /></svg>
      <h2 className="ml-[7px] flex-1">View 1, Hatches</h2>
      <WindowButtons />
    </header>
    <div className="h-6 flex items-center bg-[#efefef] border-b border-[#999]">
      <Tool name="viewAttr" /><Drop />
      <Tool name="display" corner /><Tool name="light" /><Drop />
      <Sep />
      {["brush", "zoomIn", "zoomOut", "zoomWin", "fit", "rotate", "hand"].map((n) => <Tool key={n} name={n} />)}
      <Sep />
      <Tool name="prevView" /><Tool name="nextView" />
      <Sep />
      <Tool name="copyView" /><Tool name="clip" corner /><Tool name="clipMask" />
    </div>
    <Canvas />
  </div>
);

const Toolbar = () => (
  <div className="h-6 flex bg-[#efefef] border-b border-[#8d939c]">
    <div className="flex items-center pr-[2px] rounded-r bg-linear-to-b from-[#fafafa] to-[#d4d4d4] text-[9px] text-[#222]">
      <Grip />
      <button aria-label="Active model" className="w-[25px] h-5 flex items-center justify-center border border-[#a08850] bg-[#f8cc80]">
        <Icon name="model" />
      </button>
      <Drop />
      <div className="relative mx-[5px]">
        <select aria-label="Active level" className="appearance-none block w-[111px] h-[18px] pl-[2px] rounded-[2px] border border-[#8c8c8c] bg-[#ededed]">
          <option>Default</option>
        </select>
        <span className="absolute inset-y-0 right-1 flex items-center pointer-events-none"><Caret /></span>
      </div>
      <button aria-label="Active color" className="w-[21px] h-5 flex items-center justify-center">
        <span className="w-[14px] h-[14px] border border-[#333] bg-white" />
      </button>
      <span className="w-[19px] text-center">0</span><Drop /><Sep />
      <Tool name="lineStyle" /><span className="w-[19px] text-center">0</span><Drop /><Sep />
      <Tool name="lineWeight" /><span className="w-[19px] text-center">0</span><Drop /><Sep />
      <Tool name="elemClass" /><span className="w-[21px] whitespace-nowrap">Prim</span><Drop /><Sep />
      <Tool name="priority" /><span className="w-[19px] text-center">0</span><Drop /><Sep /><Grip />
      {PRIMARY.map((n) => <React.Fragment key={n}><Tool name={n} /><Drop /></React.Fragment>)}
      <Tool name="info" /><Tool name="snap" /><Tool name="ball" />
    </div>
  </div>
);

const BottomBar = () => {
  const [view, setView] = useState(1);

  return (
    <div className="h-[27px] shrink-0 flex bg-[#efefef] border-b border-[#a4a4a4]">
      <div className="flex items-center pr-[11px] rounded-r bg-linear-to-b from-[#f6f6f6] to-[#cfcfcf] text-[9px] text-[#222]">
        <Grip />
        <Tool name="back" /><Drop /><Tool name="fwd" /><Drop dim /><Tool name="acsView" /><Drop />
        <div className="relative ml-px">
          <select aria-label="View group" className="appearance-none block w-[111px] h-[18px] pl-[17px] rounded-[2px] border border-[#8c8c8c] bg-[#ededed]">
            <option>Hatches Views</option>
          </select>
          <span className="absolute inset-y-0 left-[2px] flex items-center pointer-events-none"><Icon name="viewGroup" className="w-3 h-3" /></span>
          <span className="absolute inset-y-0 right-1 flex items-center pointer-events-none"><Caret /></span>
        </div>
        <Sep />
        <Tool name="viewGroup" />
        <Sep />
        <div className="flex mr-[3px]">
          {[1, 2, 3, 4, 5, 6, 7, 8].map((n) => (
            <button
              key={n}
              onClick={() => setView(n)}
              className={`w-3 h-[18px] pt-1 border-r border-b border-[#777] font-['Liberation_Sans',sans-serif] text-[10px] leading-3 ${
                n === view ? "bg-[#f6cd84]" : "bg-[#e6e6e6]"
              }`}
            >
              {n}
            </button>
          ))}
        </div>
        <Grip />
        {["cube", "lights", "film", "jar", "axes", "gnome"].map((n) => <Tool key={n} name={n} corner />)}
        <Sep /><Grip />
        <label htmlFor="x" className="w-[22px] text-center text-xs font-bold text-black">X</label>
        <input id="x" defaultValue="766:2 7/8" className="w-[118px] h-[14px] px-[3px] border border-[#b4b4b4] bg-white text-[#777] font-['Liberation_Sans',sans-serif] outline-none" />
        <Sep />
        <label htmlFor="y" className="w-[22px] text-center text-xs font-bold text-black">Y</label>
        <input id="y" defaultValue="84:2" className="w-[118px] h-[14px] px-[3px] border border-[#b4b4b4] bg-white text-[#777] font-['Liberation_Sans',sans-serif] outline-none" />
      </div>
    </div>
  );
};

const Cell = ({ className = "w-6", children }) => (
  <div className={`${className} shrink-0 flex items-center justify-center border-l border-t border-[#a0a0a0]`}>{children}</div>
);

const StatusBar = () => (
  <footer className="h-[21px] shrink-0 flex bg-[#f0f0f0] font-['Liberation_Sans',sans-serif] text-[9px] text-[#222]">
    <div className="w-[300px] shrink-0 pl-[3px] flex items-center">Hatch Area &gt; Identify element</div>
    <Cell><svg viewBox="0 0 5 3" className="w-[5px] h-[3px] mb-4 ml-auto"><path d="M0 3h5L2.500 0z" fill="#111" /></svg></Cell>
    <div className="flex-1 pl-px flex items-center">Shape, Level: Default</div>
    <Cell><Icon name="snapMode" className="w-3 h-3" /></Cell>
    <Cell><Icon name="lock" className="w-[10px] h-[10px]" /></Cell>
    <Cell className="w-[100px]"><span className="flex-1 pl-px">Default</span></Cell>
    <Cell className="w-[90px]" />
    <Cell /><Cell />
    <Cell><Icon name="disk" className="w-[10px] h-[10px]" /></Cell>
    <Cell><Icon name="plot" className="w-3 h-3" /></Cell>
    <Cell><Icon name="home" className="w-3 h-3" /></Cell>
    <Cell />
  </footer>
);

const App = () => {
  return (
    <div className="h-screen bg-black font-['Open_Sans',sans-serif] leading-none">
      <div className="w-3/4 h-full mx-auto flex flex-col">
        <header className="h-4 shrink-0 pl-[2px] pr-px flex items-center bg-linear-to-b from-[#9db4d4] to-[#b8cce6] border-t border-[#4a5a78] text-[9px] text-[#182438]">
          <Icon name="logo" className="w-3 h-3" />
          <h1 className="ml-[6px] flex-1">Mod 10 V8i.dgn [2D - V8 DGN] - MicroStation V8i (SELECTseries 2)</h1>
          <WindowButtons />
        </header>
        <nav className="h-[21px] shrink-0 flex items-center gap-[10px] bg-[#f0f0f0] text-[9px] text-[#222]">
          <Grip />
          {MENUS.map((m, i) => (
            <button key={m} className={i === 0 ? "-ml-1" : ""}><Accel text={m} /></button>
          ))}
        </nav>
        <Toolbar />
        <div className="flex-1 min-h-0 flex">
          <TasksPanel />
          <ViewWindow />
        </div>
        <BottomBar />
        <StatusBar />
      </div>
    </div>
  );
};

export default App;
